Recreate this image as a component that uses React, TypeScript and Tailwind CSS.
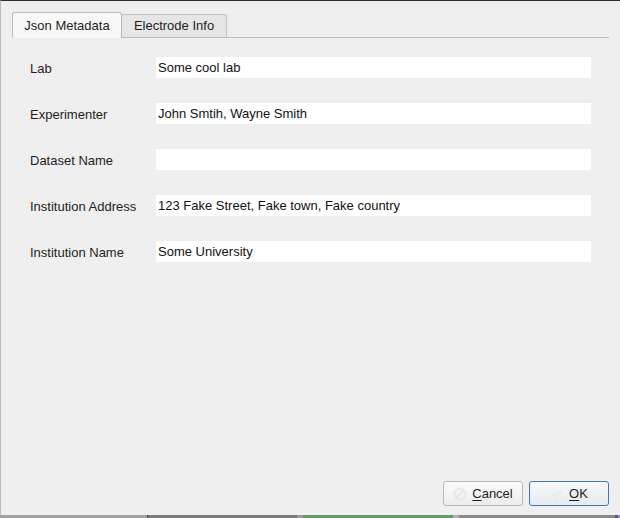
import React from "react";

const fields = [
  { label: "Lab", value: "Some cool lab" },
  { label: "Experimenter", value: "John Smtih, Wayne Smith" },
  { label: "Dataset Name", value: "" },
  { label: "Institution Address", value: "123 Fake Street, Fake town, Fake country" },
  { label: "Institution Name", value: "Some University" },
];

function BanIcon() {
  return (
    <svg width="14" height="14" viewBox="0 0 14 14" className="shrink-0">
      <circle cx="7" cy="7" r="5.5" fill="none" stroke="#e6e6e6" strokeWidth="1.6" />
      <line x1="3.2" y1="10.8" x2="10.8" y2="3.2" stroke="#e6e6e6" strokeWidth="1.6" />
    </svg>
  );
}

function CheckIcon() {
  return (
    <svg width="14" height="14" viewBox="0 0 14 14" className="shrink-0">
      <path d="M2.5 7.5 L5.5 10.5 L11.5 3.5" fill="none" stroke="#e6eaee" strokeWidth="1.6" />
    </svg>
  );
}

export default function App() {
  return (
    <div className="flex h-[518px] w-[620px] flex-col overflow-hidden font-['Liberation_Sans',Arial,sans-serif] text-[13px] text-[#1e1e1e]">
      <div className="flex flex-1 flex-col border-t border-l border-t-[#2e2e2e] border-l-[#bdbdbd] bg-[#efefef] pt-[11px] pl-[11px] pr-[11px]">
        {/* tabs */}
        <div className="flex items-end border-b border-[#bcbcbc]">
          <div className="-mb-px flex h-[26px] w-[110px] items-center justify-center rounded-t-[3px] border border-b-0 border-[#bcbcbc] bg-[#f8f8f8]">
            Json Metadata
          </div>
          <div className="flex h-[23px] w-[105px] items-center justify-center rounded-tr-[3px] border border-b-0 border-l-0 border-[#c2c2c2] bg-[#e6e6e6]">
            Electrode Info
          </div>
        </div>

        {/* form */}
        <div className="mt-[19px] grid grid-cols-[126px_1fr] gap-y-[25px] px-[18px]">
          {fields.map((f) => (
            <React.Fragment key={f.label}>
              <div className="flex h-[21px] items-center pt-[2px]">{f.label}</div>
              <div className="flex h-[21px] items-center bg-white pl-[2px] text-[#111]">{f.value}</div>
            </React.Fragment>
          ))}
        </div>

        {/* buttons */}
        <div className="mt-auto mb-[9px] flex justify-end gap-[6px]">
          <button className="flex h-[25px] w-[80px] items-center justify-center gap-[5px] rounded-[3px] border border-[#b9b9b9] bg-gradient-to-b from-[#fbfbfb] to-[#ededed] text-[#1e1e1e]">
            <BanIcon />
            <span>
              <span className="underline underline-offset-2">C</span>ancel
            </span>
          </button>
          <button className="flex h-[25px] w-[80px] items-center justify-center gap-[5px] rounded-[3px] border border-[#3d7ab3] bg-gradient-to-b from-[#f6f8fa] to-[#e7ebef] text-[#1e1e1e]">
            <CheckIcon />
            <span>
              <span className="underline underline-offset-2">O</span>K
            </span>
          </button>
        </div>
      </div>

      {/* window behind the dialog */}
      <div className="flex h-[3px] shrink-0">
        <div className="w-[147px] bg-[#a2a2a2]" />
        <div className="w-[1px] bg-[#444]" />
        <div className="w-[149px] bg-[#7a7a7a]" />
        <div className="w-[6px] bg-[#9a9a9a]" />
        <div className="w-[150px] bg-[#5e9e60]" />
        <div className="w-[6px] bg-[#b0b0b0]" />
        <div className="w-[156px] bg-[#8a8a8a]" />
        <div className="w-[3px] bg-[#3a5fae]" />
        <div className="flex-1 bg-[#9a9a9a]" />
      </div>
    </div>
  );
}
